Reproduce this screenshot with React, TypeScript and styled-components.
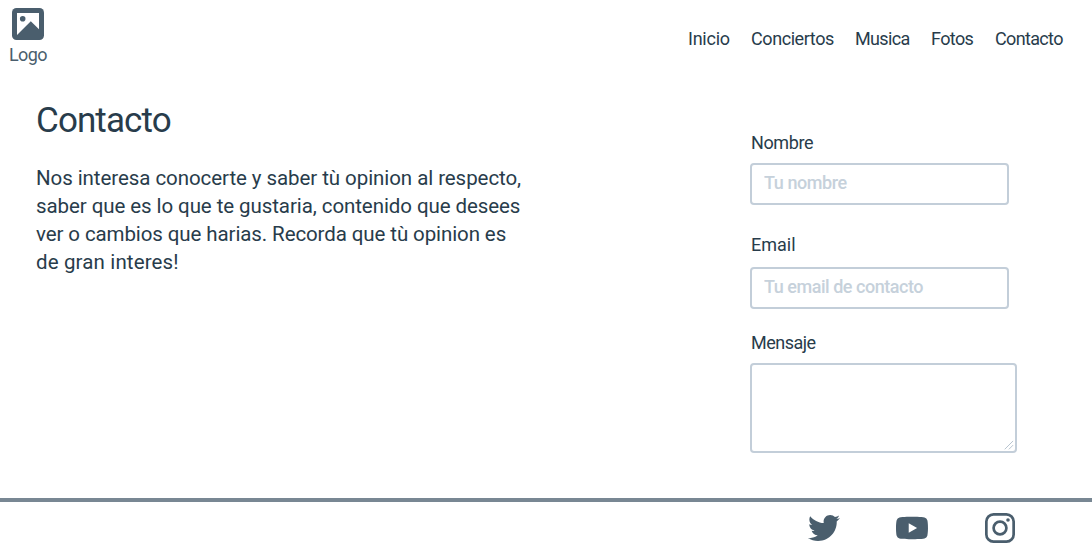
import React from "react";
import styled, { createGlobalStyle } from "styled-components";
import { FaTwitter } from "react-icons/fa";
import { SiYoutube } from "react-icons/si";

const GlobalStyle = createGlobalStyle`
  * { box-sizing: border-box; }
  body {
    margin: 0;
    background: #fff;
    color: #283c4b;
    font-family: "DIN Next", Roboto, sans-serif;
  }
`;

const Page = styled.div`
  display: flex;
  flex-direction: column;
  height: 560px;
  overflow: hidden;
`;

const Header = styled.header`
  display: flex;
  justify-content: space-between;
  height: 80px;
  padding: 8px 29px 0 9px;
`;

const Logo = styled.a`
  display: flex;
  flex-direction: column;
  align-items: flex-start;
  color: #4a5e6d;
  font-size: 18px;
  line-height: 22px;
  svg { display: block; margin: 0 0 4px 3px; }
`;

const Spaced = styled.span<{ $spacing: number }>`
  letter-spacing: ${(p) => p.$spacing}px;
  white-space: nowrap;
`;

const Nav = styled.nav`
  display: grid;
  grid-template-columns: 63px 104px 76px 64px 68px;
  padding-top: 20px;
  font-size: 18px;
  line-height: 22px;
`;

const Main = styled.main`
  display: grid;
  grid-template-columns: 714px 1fr;
  height: 418px;
  padding-left: 36px;
`;

const Intro = styled.section`
  padding-top: 19px;
`;

const Title = styled.h1`
  margin: 0;
  font-size: 35px;
  font-weight: 400;
  line-height: 44px;
`;

const Lead = styled.p`
  display: flex;
  flex-direction: column;
  margin: 21px 0 0;
  font-size: 20.5px;
  line-height: 28px;
`;

const Form = styled.form`
  padding-top: 52px;
`;

const Field = styled.div<{ $gap: number; $after: number }>`
  display: flex;
  flex-direction: column;
  align-items: flex-start;
  gap: ${(p) => p.$gap}px;
  margin-bottom: ${(p) => p.$after}px;
`;

const Label = styled.label`
  padding-left: 1px;
  font-size: 18px;
  line-height: 22px;
`;

const Input = styled.input<{ $spacing: number }>`
  width: 259px;
  height: 42px;
  padding: 0 12px 3px;
  border: 2px solid #c3ced9;
  border-radius: 4px;
  outline: none;
  background: #fff;
  font: 500 18px/22px Roboto, sans-serif;
  letter-spacing: ${(p) => p.$spacing}px;
  &::placeholder { color: #c6d1db; opacity: 1; }
`;

const AreaWrap = styled.div`
  position: relative;
  svg { position: absolute; right: 3px; bottom: 3px; }
`;

const TextArea = styled.textarea`
  display: block;
  width: 267px;
  height: 90px;
  border: 2px solid #c3ced9;
  border-radius: 4px;
  outline: none;
  resize: none;
`;

const Footer = styled.footer`
  display: flex;
  align-items: center;
  justify-content: flex-end;
  height: 56px;
  padding: 0 77px 0 0;
  border-top: 4px solid #788793;
  color: #4a5e6d;
  svg { display: block; }
`;

const Social = styled.a<{ $gap: number }>`
  margin-right: ${(p) => p.$gap}px;
`;

const links: [string, number][] = [
  ["Inicio", -0.25],
  ["Conciertos", -0.42],
  ["Musica", -0.65],
  ["Fotos", -0.6],
  ["Contacto", -0.65],
];

const lead: [string, number][] = [
  ["Nos interesa conocerte y saber tù opinion al respecto,", -0.07],
  ["saber que es lo que te gustaria, contenido que desees", -0.08],
  ["ver o cambios que harias. Recorda que tù opinion es", -0.1],
  ["de gran interes!", 0.14],
];

export default function App() {
  return (
    <Page>
      <GlobalStyle />
      <Header>
        <Logo>
          <svg width="32" height="32" viewBox="0 0 32 32">
            <rect width="32" height="32" rx="4.5" fill="currentColor" />
            <path d="M5 5h22v16.3l-8.2-8L5 27z" fill="#fff" />
            <circle cx="10.7" cy="10.7" r="2.8" fill="currentColor" />
          </svg>
          <Spaced $spacing={-0.6}>Logo</Spaced>
        </Logo>
        <Nav>
          {links.map(([text, spacing]) => (
            <Spaced key={text} $spacing={spacing}>{text}</Spaced>
          ))}
        </Nav>
      </Header>
      <Main>
        <Intro>
          <Title><Spaced $spacing={-0.9}>Contacto</Spaced></Title>
          <Lead>
            {lead.map(([text, spacing]) => (
              <Spaced key={text} $spacing={spacing}>{text}</Spaced>
            ))}
          </Lead>
        </Intro>
        <Form>
          <Field $gap={9} $after={29}>
            <Label htmlFor="nombre"><Spaced $spacing={-0.4}>Nombre</Spaced></Label>
            <Input id="nombre" placeholder="Tu nombre" $spacing={-0.42} />
          </Field>
          <Field $gap={11} $after={23}>
            <Label htmlFor="email"><Spaced $spacing={0}>Email</Spaced></Label>
            <Input id="email" placeholder="Tu email de contacto" $spacing={-0.47} />
          </Field>
          <Field $gap={9} $after={0}>
            <Label htmlFor="mensaje"><Spaced $spacing={-0.5}>Mensaje</Spaced></Label>
            <AreaWrap>
              <TextArea id="mensaje" />
              <svg width="10" height="10" viewBox="0 0 10 10" stroke="#b9c5d0" fill="none">
                <path d="M.7 9.3l8.4-8.4M4.9 9.3l4.2-4.2" />
              </svg>
            </AreaWrap>
          </Field>
        </Form>
      </Main>
      <Footer>
        <Social $gap={56}><FaTwitter size={32} /></Social>
        <Social $gap={57}><SiYoutube size={32} /></Social>
        <Social $gap={0}>
          <svg width="30" height="30" viewBox="0 0 30 30" fill="none" stroke="currentColor" strokeWidth="2.7">
            <rect x="1.35" y="1.35" width="27.3" height="27.3" rx="7.2" />
            <circle cx="15" cy="15" r="6.4" />
            <circle cx="23" cy="7" r="1.8" fill="currentColor" stroke="none" />
          </svg>
        </Social>
      </Footer>
    </Page>
  );
}
